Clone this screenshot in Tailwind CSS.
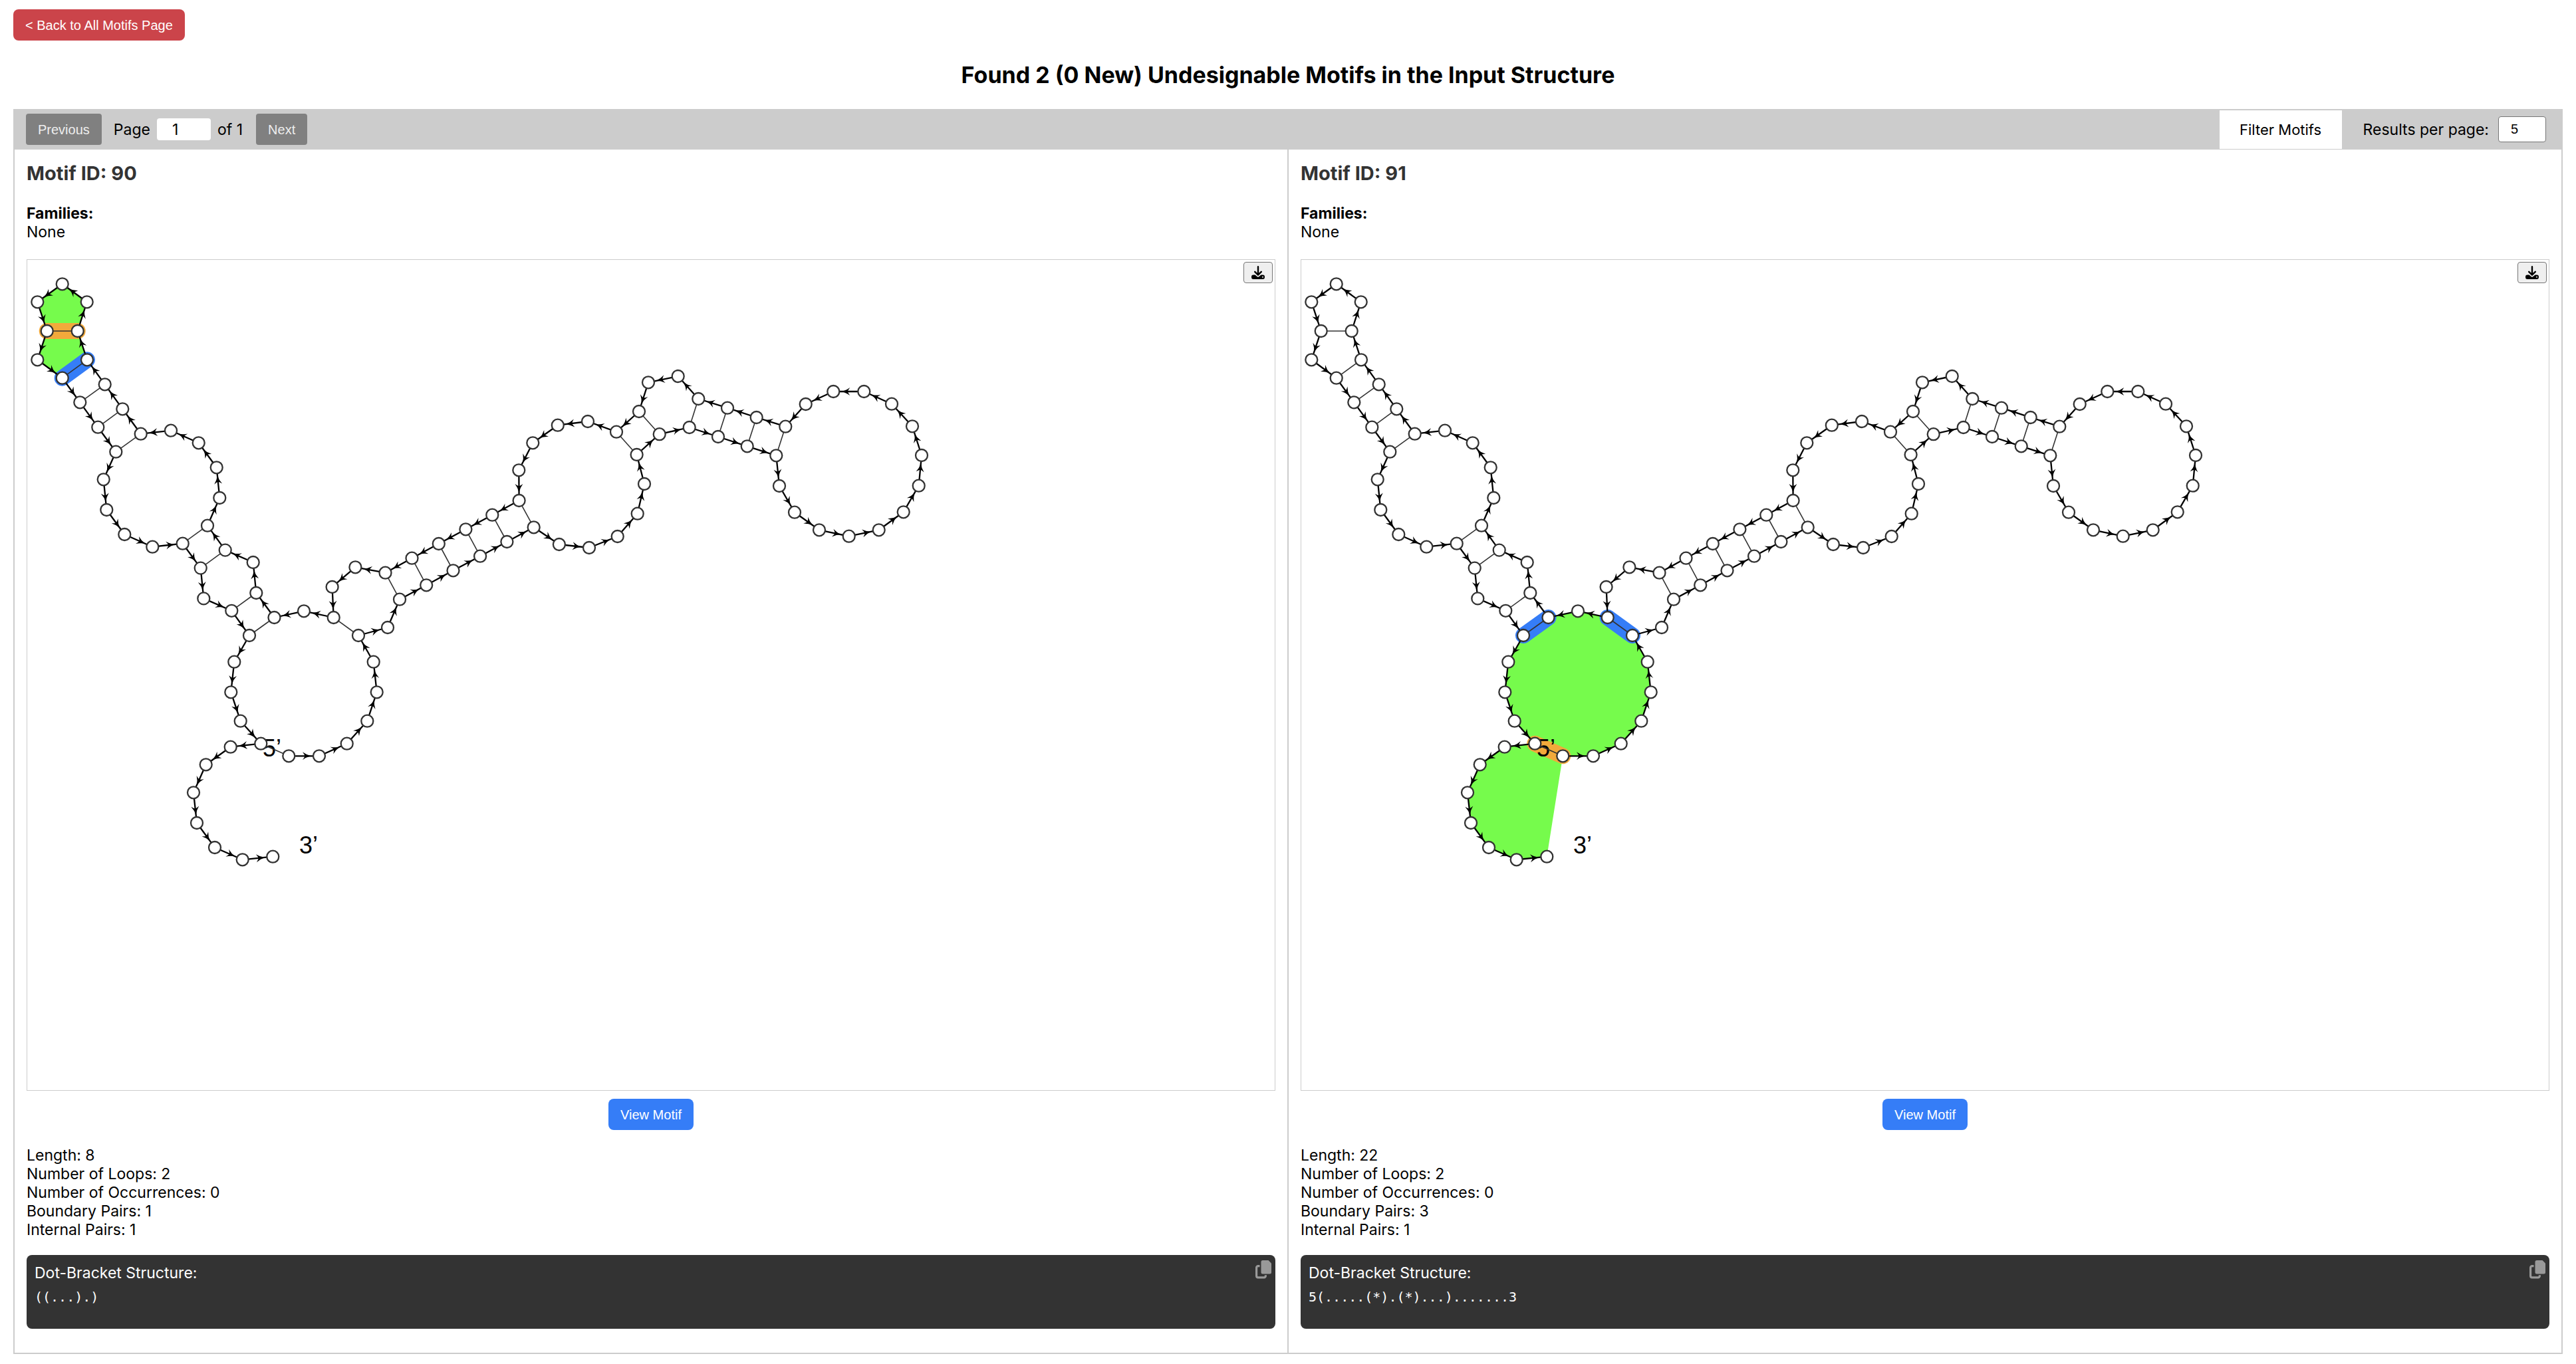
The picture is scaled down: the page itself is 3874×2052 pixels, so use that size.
<!DOCTYPE html>
<html lang="en">
<head>
<meta charset="utf-8">
<title>Undesignable Motifs</title>
<script src="https://cdn.jsdelivr.net/npm/@tailwindcss/browser@4"></script>
</head>
<body class="bg-white px-5 pt-[14px] pb-[15px] font-[Inter,sans-serif] text-[23px] leading-7 text-black">

<header>
  <a href="#motifs" class="inline-flex h-[47px] items-center rounded-lg bg-[#cb444a] px-[18px] align-top font-['Liberation_Sans',sans-serif] text-xl text-white">&lt; Back to All Motifs Page</a>
  <h1 class="mt-[30px] text-center text-[34px] leading-[44px] font-bold">Found 2 (0 New) Undesignable Motifs in the Input Structure</h1>
</header>

<main class="mt-[29px]">
  <div class="flex h-[61px] items-center justify-between bg-[#ccc] pr-[25px] pl-[19px]">
    <nav class="flex items-center" aria-label="Pages">
      <button type="button" class="h-[47px] rounded bg-[#808080] px-[18px] font-['Liberation_Sans',sans-serif] text-xl text-[#eee]">Previous</button>
      <label for="page" class="ml-[18px]">Page</label>
      <input id="page" type="text" value="1" class="mx-[10px] h-[33px] w-[81px] rounded bg-white pl-[23px]">
      <span>of 1</span>
      <button type="button" class="ml-5 h-[47px] rounded bg-[#808080] px-[18px] font-['Liberation_Sans',sans-serif] text-xl text-[#eee]">Next</button>
    </nav>
    <div class="flex items-center">
      <button type="button" class="mr-8 h-[58px] w-[184px] bg-white text-[22px]">Filter Motifs</button>
      <label for="per-page">Results per page:</label>
      <input id="per-page" type="text" value="5" class="ml-[14px] h-[39px] w-[72px] rounded border border-[#767676] bg-white pl-[18px] font-['Liberation_Sans',sans-serif] text-xl">
    </div>
  </div>

  <div class="flex border-x-2 border-b-2 border-[#ccc]">
    <section class="flex-1 px-[18px] pt-[18px] pb-9">
      <h2 class="text-[29px] leading-9 font-bold text-[#333]">Motif ID: 90</h2>
      <div class="mt-7">
        <p class="font-bold">Families:</p>
        <p>None</p>
      </div>
      <div class="relative mt-[27px] border border-[#ccc]">
        <svg id="plot-90" class="h-auto w-full" viewBox="1 1 1876 1249" role="img" aria-label="Structure plot of motif 90"></svg>
        <button type="button" aria-label="Download plot" class="absolute top-[3px] right-[3px] flex h-8 w-11 items-center justify-center rounded border border-[#767676] bg-[#efefef]">
          <svg class="h-5 w-5" viewBox="0 0 20 20"><path fill="#000" fill-rule="evenodd" d="M2.8 13.4H5.6L8.4 16Q10 17.3 11.600 16L14.400 13.400H17.200A2.800 3.300 0 0 1 17.200 20H2.800A2.800 3.300 0 0 1 2.800 13.400ZM17 15.800A1 1 0 1 0 17 17.800A1 1 0 1 0 17 15.800Z"/><path fill="none" stroke="#000" stroke-width="2.400" stroke-linecap="round" stroke-linejoin="round" d="M10 1.200V13.300M5.200 8.800L10 13.600L14.800 8.800"/></svg>
        </button>
      </div>
      <div class="mt-3 flex justify-center">
        <button type="button" class="h-[47px] rounded-lg bg-[#357df7] px-[18px] font-['Liberation_Sans',sans-serif] text-xl text-white">View Motif</button>
      </div>
      <div class="mt-6">
        <p>Length: 8</p>
        <p>Number of Loops: 2</p>
        <p>Number of Occurrences: 0</p>
        <p>Boundary Pairs: 1</p>
        <p>Internal Pairs: 1</p>
      </div>
      <div class="relative mt-6 rounded-lg bg-[#333] px-3 pt-[13px] pb-9 text-white">
        <p>Dot-Bracket Structure:</p>
        <pre class="mt-[10px] font-['DejaVu_Sans_Mono',monospace] text-xl leading-6">((...).)</pre>
        <button type="button" aria-label="Copy structure" class="absolute top-2 right-[6px]">
          <svg class="h-7 w-6" viewBox="0 0 24 28"><path fill="#999" d="M11 0H19.500L24 4.500V18A2.500 2.500 0 0 1 21.500 20.500H11A2.500 2.500 0 0 1 8.500 18V2.500A2.500 2.500 0 0 1 11 0Z"/><path fill="none" stroke="#999" stroke-width="3.200" d="M6.500 8.600H4A2.400 2.400 0 0 0 1.600 11V23.500A2.400 2.400 0 0 0 4 25.900H13A2.400 2.400 0 0 0 15.400 23.500V22.300"/></svg>
        </button>
      </div>
    </section>

    <section class="box-content flex-1 border-l-2 border-[#ccc] px-[18px] pt-[18px] pb-9">
      <h2 class="text-[29px] leading-9 font-bold text-[#333]">Motif ID: 91</h2>
      <div class="mt-7">
        <p class="font-bold">Families:</p>
        <p>None</p>
      </div>
      <div class="relative mt-[27px] border border-[#ccc]">
        <svg id="plot-91" class="h-auto w-full" viewBox="1 1 1876 1249" role="img" aria-label="Structure plot of motif 91"></svg>
        <button type="button" aria-label="Download plot" class="absolute top-[3px] right-[3px] flex h-8 w-11 items-center justify-center rounded border border-[#767676] bg-[#efefef]">
          <svg class="h-5 w-5" viewBox="0 0 20 20"><path fill="#000" fill-rule="evenodd" d="M2.8 13.4H5.6L8.4 16Q10 17.3 11.600 16L14.400 13.400H17.200A2.800 3.300 0 0 1 17.200 20H2.800A2.800 3.300 0 0 1 2.800 13.400ZM17 15.800A1 1 0 1 0 17 17.800A1 1 0 1 0 17 15.800Z"/><path fill="none" stroke="#000" stroke-width="2.400" stroke-linecap="round" stroke-linejoin="round" d="M10 1.200V13.300M5.200 8.800L10 13.600L14.800 8.800"/></svg>
        </button>
      </div>
      <div class="mt-3 flex justify-center">
        <button type="button" class="h-[47px] rounded-lg bg-[#357df7] px-[18px] font-['Liberation_Sans',sans-serif] text-xl text-white">View Motif</button>
      </div>
      <div class="mt-6">
        <p>Length: 22</p>
        <p>Number of Loops: 2</p>
        <p>Number of Occurrences: 0</p>
        <p>Boundary Pairs: 3</p>
        <p>Internal Pairs: 1</p>
      </div>
      <div class="relative mt-6 rounded-lg bg-[#333] px-3 pt-[13px] pb-9 text-white">
        <p>Dot-Bracket Structure:</p>
        <pre class="mt-[10px] font-['DejaVu_Sans_Mono',monospace] text-xl leading-6">5(.....(*).(*)...).......3</pre>
        <button type="button" aria-label="Copy structure" class="absolute top-2 right-[6px]">
          <svg class="h-7 w-6" viewBox="0 0 24 28"><path fill="#999" d="M11 0H19.500L24 4.500V18A2.500 2.500 0 0 1 21.500 20.500H11A2.500 2.500 0 0 1 8.500 18V2.500A2.500 2.500 0 0 1 11 0Z"/><path fill="none" stroke="#999" stroke-width="3.200" d="M6.500 8.600H4A2.400 2.400 0 0 0 1.600 11V23.500A2.400 2.400 0 0 0 4 25.900H13A2.400 2.400 0 0 0 15.400 23.500V22.300"/></svg>
        </button>
      </div>
    </section>
  </div>
</main>

<script>
// Nucleotide centres, from the 5' end to the 3' end.
const nodes = [
  [394.3,747.3],[440,747.3],[481.7,728.7],[512.3,694.7],[526.7,651.3],[521.7,605.7],[499,566],[543,554],[561,511.7],[601.2,490.3],
  [641.5,468.3],[682.1,446.7],[722.4,425],[762.7,403.3],[800.9,429],[846,434],[888.7,417],[918.7,382.7],[929,338],[917.6,294],
  [951.7,263.2],[996.7,253],[1040,267],[1083.7,281.3],[1127.3,295.3],[1132,341],[1155,380.7],[1192,407.3],[1236.7,416.7],[1281.7,407.3],
  [1318.7,380.3],[1341.7,340.7],[1346,295],[1332,251.3],[1301,217.7],[1259.3,199],[1213.3,199],[1171.7,218],[1141.3,251.7],[1097.7,238],
  [1054,223.7],[1010.3,210],[979.7,176],[935,185.3],[921,229],[887,259.7],[844,244],[798.8,249.7],[761.3,276.3],[740.3,317.3],
  [740.6,363],[700.3,384.7],[660.4,406.3],[619.8,428],[579.5,449.7],[539.5,471.7],[494.4,463.3],[459.6,493],[461.7,539],[417,529.3],
  [372.5,539],[345.3,502],[340.7,456],[298.7,437.6],[272,400.7],[290.3,359],[285.7,313.3],[258.7,276.3],[217,257.7],[171.7,262.7],
  [144.3,225.3],[117.7,188.3],[91,151.3],[76.7,108],[90.7,64.3],[53.7,37.3],[16.3,64.3],[30.7,108],[16.3,151.3],[53.7,178.7],
  [80.3,215.3],[107.3,252.7],[134.3,289.7],[115.7,331.3],[120.3,377],[147.3,414],[189.3,432.7],[234.7,427.7],[261.7,464.6],[266.3,510.4],
  [308.3,528.8],[335,566],[312.3,605.7],[307.3,651.3],[321.7,694.7],[352.3,728.7],[306.7,733.7],[269.7,760.3],[251,802.3],[256,848],
  [283,885],[324.7,903.3],[370.3,898.7]
];
// Base pairs, as 1-based positions.
const pairs = [
  [1,96],[7,59],[9,56],[10,55],[11,54],[12,53],[13,52],[14,51],[20,46],[21,45],[22,42],[23,41],[24,40],[25,39],
  [61,92],[62,91],[64,89],[65,88],[70,83],[71,82],[72,81],[73,80],[74,78]
];
const at = i => nodes[i - 1];
const range = (a, b) => Array.from({ length: b - a + 1 }, (_, k) => a + k);
const line = (a, b, attrs) => `<line x1="${a[0]}" y1="${a[1]}" x2="${b[0]}" y2="${b[1]}" ${attrs}/>`;

function draw(id, loop, boundary, internal) {
  let out = `<polygon fill="#76fb4c" points="${loop.map(i => at(i).join(',')).join(' ')}"/>`;
  for (const [a, b] of boundary) out += line(at(a), at(b), 'stroke="#357df7" stroke-width="24" stroke-linecap="round"');
  for (const [a, b] of internal) out += line(at(a), at(b), 'stroke="#f2a93b" stroke-width="24" stroke-linecap="round"');
  out += '<text x="355" y="748" font-family="Liberation Sans" font-size="36">5’</text>';
  out += '<text x="410" y="894" font-family="Liberation Sans" font-size="36">3’</text>';
  for (const [a, b] of pairs) out += line(at(a), at(b), 'stroke="#333" stroke-width="1.600"');
  for (let i = 0; i < nodes.length - 1; i++) {
    const a = nodes[i], b = nodes[i + 1];
    const angle = Math.atan2(b[1] - a[1], b[0] - a[0]);
    const tip = [b[0] - 13 * Math.cos(angle), b[1] - 13 * Math.sin(angle)];
    out += line(a, b, 'stroke="#000" stroke-width="2.300"');
    out += `<path transform="translate(${tip}) rotate(${angle * 180 / Math.PI})" d="M1 0Q-6 -1.500 -12 -6Q-9 -2 -8.500 0Q-9 2 -12 6Q-6 1.500 1 0Z"/>`;
  }
  for (const [x, y] of nodes) out += `<circle cx="${x}" cy="${y}" r="9" fill="#fff" stroke="#333" stroke-width="2.300"/>`;
  document.getElementById(id).innerHTML = out;
}

draw('plot-90', range(73, 80), [[73, 80]], [[74, 78]]);
draw('plot-91', [...range(1, 7), 59, 60, 61, ...range(92, 103)], [[7, 59], [61, 92]], [[1, 96]]);
</script>
</body>
</html>
